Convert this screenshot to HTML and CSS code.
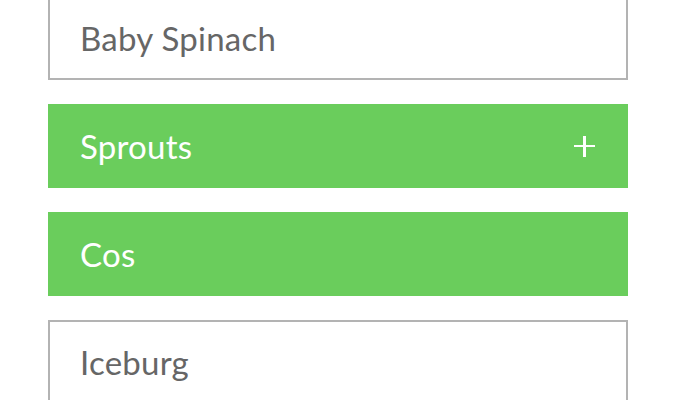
FILE: index.html
```html
<!DOCTYPE html>
<html>
<head>
<meta charset="utf-8">
<link rel="stylesheet" href="styles.css">
</head>
<body>
<ul class="list">
  <li class="item">Baby Spinach</li>
  <li class="item item-active"><span>Sprouts</span><span class="plus" aria-hidden="true"></span></li>
  <li class="item item-active">Cos</li>
  <li class="item">Iceburg</li>
</ul>
</body>
</html>
```
FILE: styles.css
```css
html, body {
  margin: 0;
  padding: 0;
  background: #ffffff;
}
body {
  width: 676px;
  height: 400px;
  overflow: hidden;
  font-family: Lato, "Open Sans", sans-serif;
}
.list {
  list-style: none;
  margin: -4px 48px 0;
  padding: 0;
  display: flex;
  flex-direction: column;
  gap: 24px;
}
.item {
  box-sizing: border-box;
  height: 84px;
  display: flex;
  align-items: center;
  justify-content: space-between;
  padding: 0 33px 0 30px;
  border: 2px solid #b3b3b3;
  color: #666666;
  font-size: 33px;
  letter-spacing: 0.25px;
  line-height: 1;
}
.item-active {
  border: none;
  background: #6acd5c;
  color: #ffffff;
  padding-left: 32px;
}
.plus {
  position: relative;
  width: 21px;
  height: 21px;
}
.plus::before, .plus::after {
  content: "";
  position: absolute;
  background: #ffffff;
}
.plus::before {
  left: 0;
  right: 0;
  top: 9px;
  height: 2.5px;
}
.plus::after {
  top: 0;
  bottom: 0;
  left: 9px;
  width: 2.5px;
}
```
